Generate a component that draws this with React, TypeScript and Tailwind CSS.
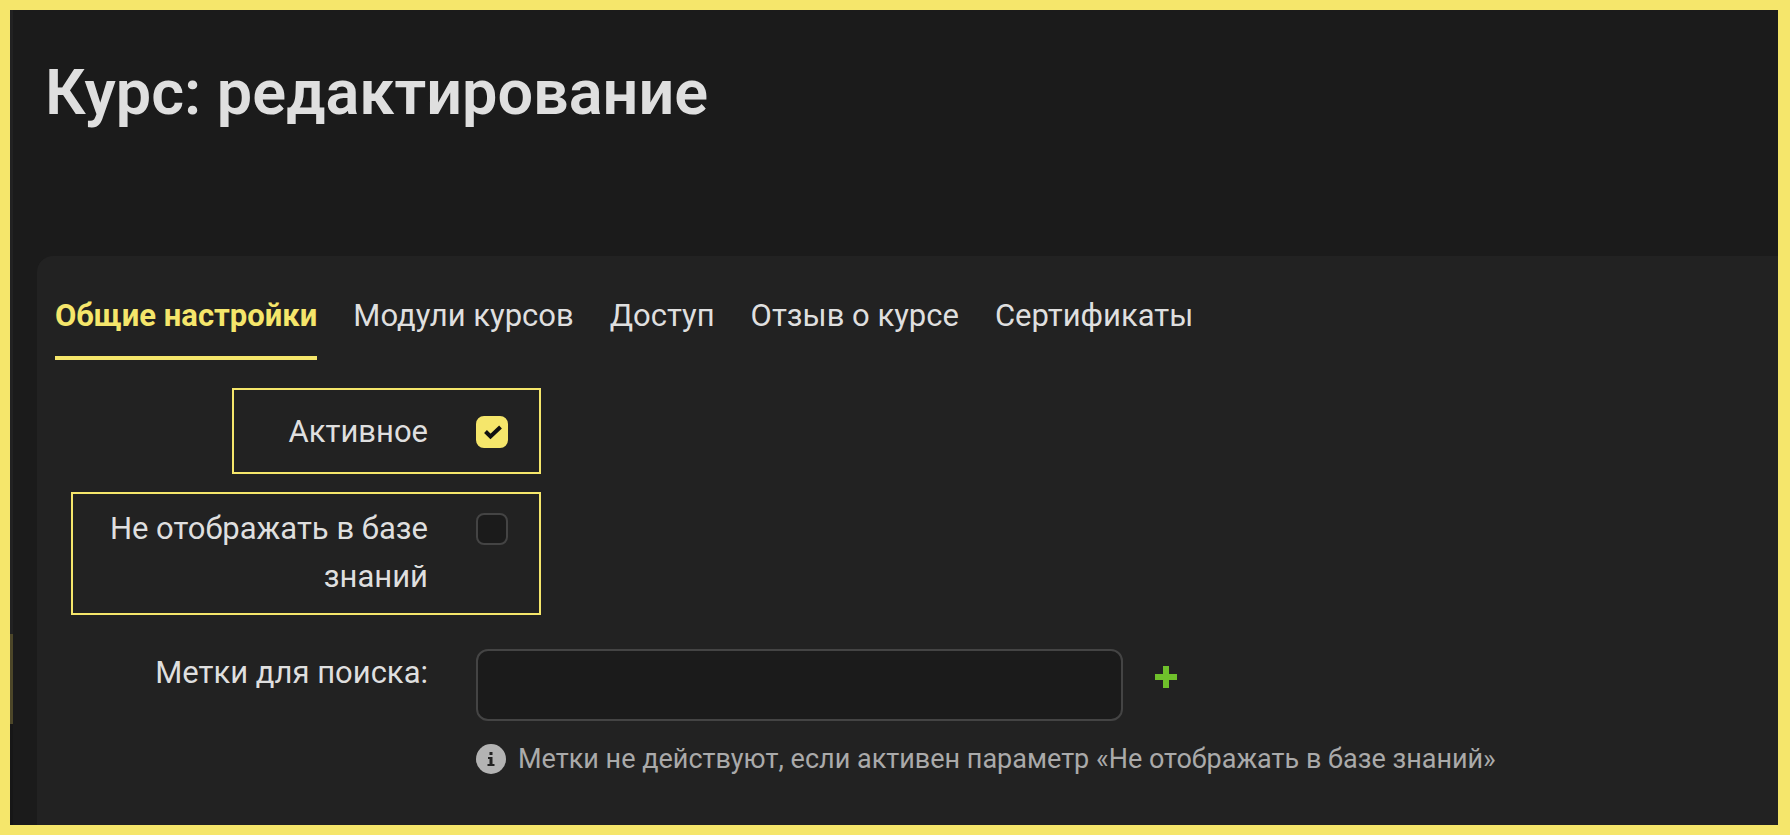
import React, { useState } from 'react';

const tabs = [
  { id: 'general', label: 'Общие настройки' },
  { id: 'modules', label: 'Модули курсов' },
  { id: 'access', label: 'Доступ' },
  { id: 'review', label: 'Отзыв о курсе' },
  { id: 'certificates', label: 'Сертификаты' },
];

interface CheckboxProps {
  id: string;
  checked: boolean;
  onChange: (value: boolean) => void;
}

const Checkbox: React.FC<CheckboxProps> = ({ id, checked, onChange }) => (
  <span className="relative mt-2 h-8 w-8 shrink-0">
    <input
      id={id}
      type="checkbox"
      checked={checked}
      onChange={(e) => onChange(e.target.checked)}
      className="block h-8 w-8 appearance-none rounded-lg border-2 border-[#444444] bg-[#1b1b1b] checked:border-[#f5e66b] checked:bg-[#f5e66b]"
    />
    {checked && (
      <svg viewBox="0 0 32 32" className="pointer-events-none absolute inset-0 h-8 w-8" fill="none">
        <path d="M9.5 15.5l5 5L24.5 11" stroke="#111111" strokeWidth="4" />
      </svg>
    )}
  </span>
);

const App: React.FC = () => {
  const [activeTab, setActiveTab] = useState('general');
  const [active, setActive] = useState(true);
  const [hidden, setHidden] = useState(false);
  const [tags, setTags] = useState('');

  return (
    <div className="flex min-h-screen border-10 border-r-12 border-[#f5e66b] bg-[#1b1b1b] font-[Roboto,sans-serif] text-[31px] leading-[48px] text-[#dfdfdf]">
      {/* Edge of the side menu */}
      <div className="flex w-[3px] shrink-0 flex-col bg-[#222222]">
        <div className="mt-auto h-[90px] bg-[#4c4628]"></div>
        <div className="h-[101px] bg-[#171717]"></div>
      </div>

      <div className="flex min-w-0 flex-1 flex-col pl-6">
        <h1 className="pt-[45px] pl-2 text-[63px] leading-[76px] font-semibold">Курс: редактирование</h1>

        <main className="mt-[125px] flex-1 rounded-tl-2xl bg-[#222222] pl-[18px]">
          <nav className="flex gap-9 pt-9">
            {tabs.map((tab) => (
              <button
                key={tab.id}
                type="button"
                onClick={() => setActiveTab(tab.id)}
                className={
                  activeTab === tab.id
                    ? 'border-b-4 border-[#f5e66b] pb-4 font-bold text-[#f5e66b]'
                    : 'border-b-4 border-transparent pb-4'
                }
              >
                {tab.label}
              </button>
            ))}
          </nav>

          <form className="mt-7 pl-4" onSubmit={(e) => e.preventDefault()}>
            <div className="flex w-[470px] flex-col items-end gap-[18px]">
              <div className="flex w-[309px] gap-12 border-2 border-[#f5e66b] pt-[18px] pr-[31px] pb-4">
                <label htmlFor="active" className="flex-1 text-right">Активное</label>
                <Checkbox id="active" checked={active} onChange={setActive} />
              </div>
              <div className="flex w-full gap-12 border-2 border-[#f5e66b] pt-[11px] pr-[31px] pb-3 pl-5">
                <label htmlFor="hidden" className="flex-1 text-right">Не отображать в базе знаний</label>
                <Checkbox id="hidden" checked={hidden} onChange={setHidden} />
              </div>
            </div>

            <div className="mt-[34px] flex gap-12">
              <label htmlFor="tags" className="w-[357px] shrink-0 text-right">Метки для поиска:</label>
              <div className="min-w-0 flex-1">
                <div className="flex gap-8">
                  <input
                    id="tags"
                    type="text"
                    value={tags}
                    onChange={(e) => setTags(e.target.value)}
                    className="h-[72px] w-full max-w-[647px] rounded-xl border-2 border-[#444444] bg-[#1b1b1b] px-5 outline-none"
                  />
                  <button type="button" aria-label="Добавить" className="h-14 shrink-0">
                    <svg viewBox="0 0 22 22" className="h-[22px] w-[22px]" fill="#6fc02b">
                      <path d="M8 0h6v8h8v6h-8v8H8v-8H0V8h8z" />
                    </svg>
                  </button>
                </div>
                <p className="mt-3.5 flex items-center gap-3 text-[27px] leading-[48px] text-[#aaaaaa]">
                  <svg viewBox="0 0 30 30" className="h-[30px] w-[30px] shrink-0">
                    <circle cx="15" cy="15" r="15" fill="#b3b3b3" />
                    <path d="M13.5 8h3v3h-3zM12 13h4.5v7h2v2h-7v-2h2v-5H12z" fill="#222222" />
                  </svg>
                  Метки не действуют, если активен параметр «Не отображать в базе знаний»
                </p>
              </div>
            </div>
          </form>
        </main>
      </div>
    </div>
  );
};

export default App;
